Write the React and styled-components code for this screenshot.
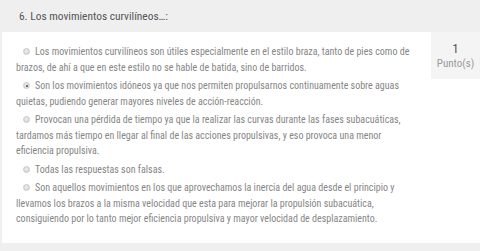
import React from "react";
import styled, { createGlobalStyle } from "styled-components";

const GlobalStyle = createGlobalStyle`
  html, body { margin: 0; padding: 0; background: #efefef; }
  body {
    font-family: "Roboto", sans-serif;
    font-stretch: condensed;
  }
`;

const Page = styled.div`
  width: 480px;
  height: 251px;
  background: #efefef;
  display: flex;
  flex-direction: column;
  overflow: hidden;
`;

const Header = styled.div`
  height: 32px;
  display: flex;
  align-items: center;
  padding-left: 19px;
  font-size: 11.4px;
  color: #555;
`;

const Body = styled.div`
  height: 211px;
  margin-left: 2px;
  background: #fff;
  display: grid;
  grid-template-columns: 1fr 49px;
`;

const Options = styled.div`
  padding: 12px 0 0 14px;
  display: flex;
  flex-direction: column;
  gap: 3px;
`;

const Option = styled.p`
  margin: 0;
  font-size: 10px;
  line-height: 15.5px;
  color: #868686;
  width: 402px;
`;

const Radio = styled.span`
  display: inline-block;
  width: 7px;
  height: 7px;
  border-radius: 50%;
  background: radial-gradient(circle at 50% 40%, #eee 0%, #d0d0d0 100%);
  border: 1px solid #c8c8c8;
  box-sizing: border-box;
  margin: 0 5px 0 7px;
  vertical-align: 0;
  position: relative;
  &::after {
    content: "";
    display: ${(p) => (p.$checked ? "block" : "none")};
    position: absolute;
    left: 1.5px;
    top: 1.5px;
    width: 2px;
    height: 2px;
    border-radius: 50%;
    background: #444;
  }
`;

const Points = styled.div`
  align-self: start;
  height: 47px;
  background: #f4f4f4;
  display: flex;
  flex-direction: column;
  align-items: center;
  justify-content: center;
`;

const Score = styled.span`
  font-size: 13px;
  color: #555;
  line-height: 15px;
`;

const ScoreLabel = styled.span`
  font-size: 11px;
  color: #9a9a9a;
  line-height: 15px;
`;

const options = [
  "Los movimientos curvilíneos son útiles especialmente en el estilo braza, tanto de pies como de brazos, de ahí a que en este estilo no se hable de batida, sino de barridos.",
  "Son los movimientos idóneos ya que nos permiten propulsarnos continuamente sobre aguas quietas, pudiendo generar mayores niveles de acción-reacción.",
  "Provocan una pérdida de tiempo ya que la realizar las curvas durante las fases subacuáticas, tardamos más tiempo en llegar al final de las acciones propulsivas, y eso provoca una menor eficiencia propulsiva.",
  "Todas las respuestas son falsas.",
  "Son aquellos movimientos en los que aprovechamos la inercia del agua desde el principio y llevamos los brazos a la misma velocidad que esta para mejorar la propulsión subacuática, consiguiendo por lo tanto mejor eficiencia propulsiva y mayor velocidad de desplazamiento.",
];

export default function App() {
  return (
    <>
      <GlobalStyle />
      <Page>
        <Header>6. Los movimientos curvilíneos…:</Header>
        <Body>
          <Options>
            {options.map((text, i) => (
              <Option key={i}>
                <Radio $checked={i === 1} />
                {text}
              </Option>
            ))}
          </Options>
          <Points>
            <Score>1</Score>
            <ScoreLabel>Punto(s)</ScoreLabel>
          </Points>
        </Body>
      </Page>
    </>
  );
}
